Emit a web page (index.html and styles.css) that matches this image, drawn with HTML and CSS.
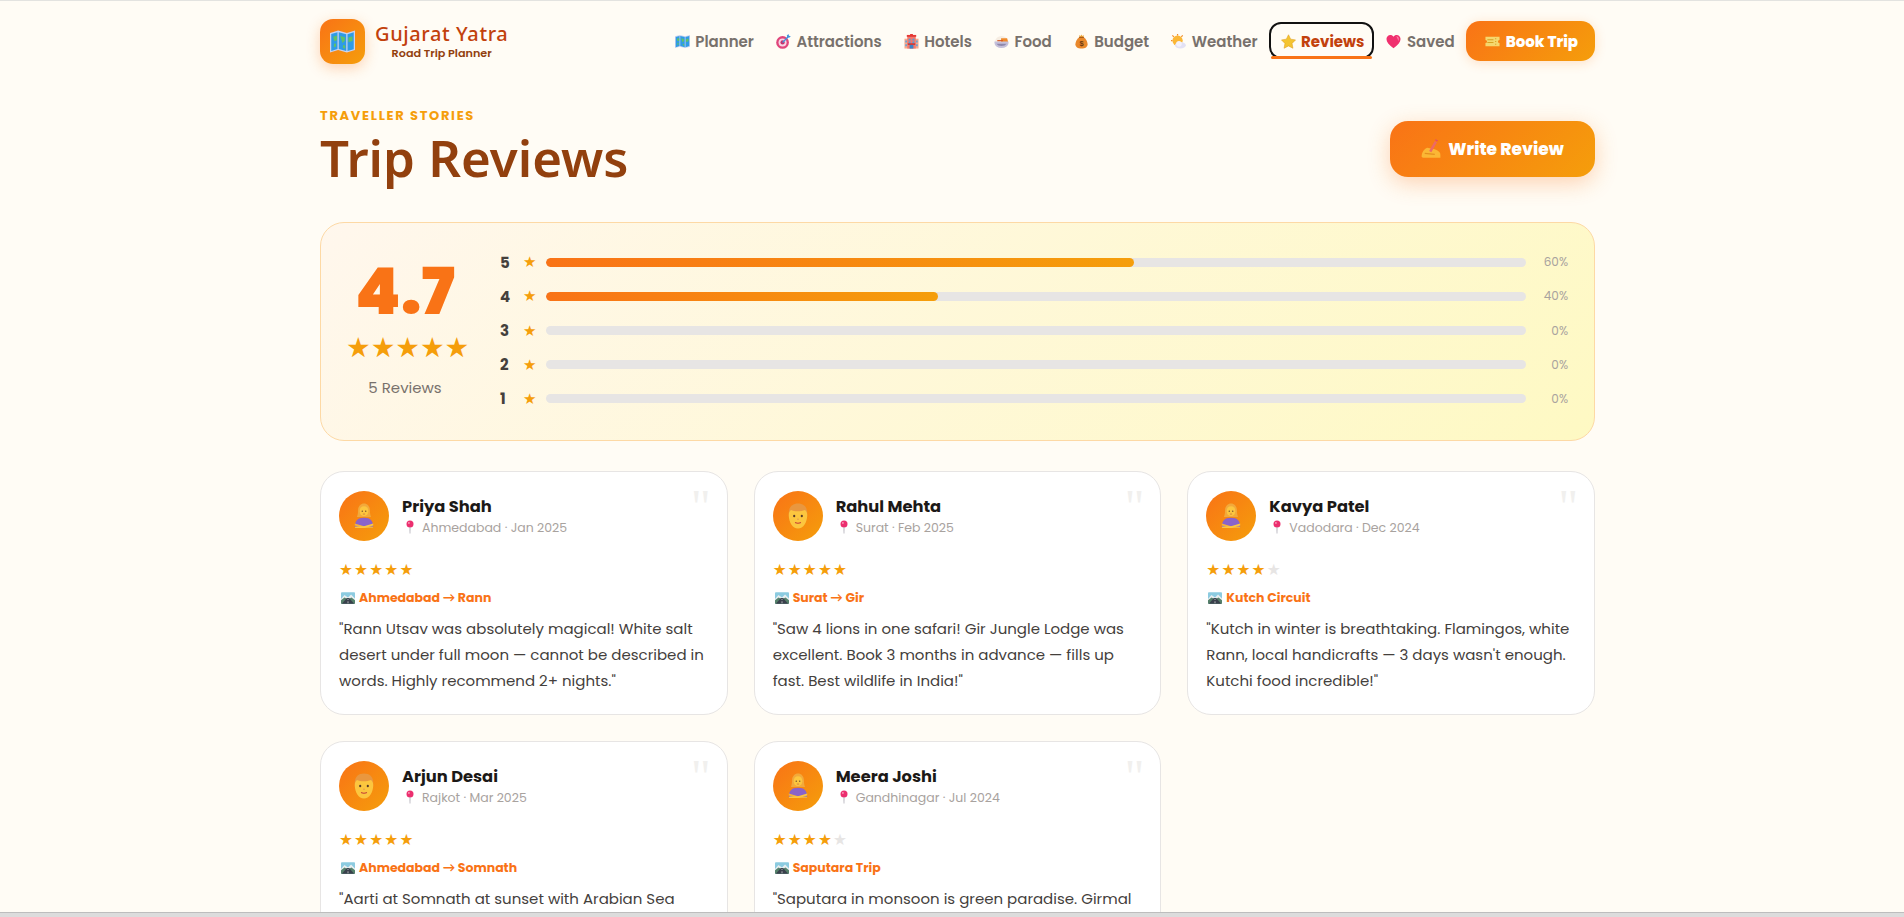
FILE: index.html
```html
<!DOCTYPE html>
<html><head><meta charset="utf-8"><title>Trip Reviews</title><link rel="stylesheet" href="styles.css"></head>
<body>
<svg width="0" height="0" class="defs">
<defs>
<symbol id="i-map" viewBox="0 0 16 16"><path d="M0 2.500L5.200 1l5.600 1.500L16 1v12.500l-5.200 1.500-5.600-1.500L0 15z" fill="#c9d2f0"/><path d="M.8 3.200l4-1.200v10.800l-4 1.200zM5.600 2l4.800 1.300v10.800L5.600 12.800zM11.200 3.300l4-1.300v10.900l-4 1.200z" fill="#2f9be6"/><path d="M2 5l2.500-.8v3l-1.700.6zM6.500 4.500l3 .8v2.200L8 9zM11.800 5.500l2.600-.8v3l-2.600.8zM8.300 10.300l1.400.3v2l-1.400-.6zM2.500 9.500l1.300-.3v2l-1.300.4z" fill="#5fc16a"/></symbol>
<symbol id="i-target" viewBox="0 0 16 16"><circle cx="7" cy="9" r="6.800" fill="#e0457b"/><circle cx="7" cy="9" r="4.300" fill="#f7d6e4"/><circle cx="7" cy="9" r="2.300" fill="#c92f6b"/><path d="M7 9l6-6" stroke="#3f93dc" stroke-width="1.400"/><path d="M11.500 1.500l.5 2 2 .5 1.800-1.700-2-.5-.500-1.800z" fill="#3f93dc"/></symbol>
<symbol id="i-hotel" viewBox="0 0 16 16"><rect x="0.500" y="5" width="15" height="10.500" fill="#f7a98e"/><rect x="3.500" y="2" width="9" height="13.500" fill="#f2786d"/><rect x="3" y="1" width="10" height="2" fill="#e53935"/><rect x="6.500" y="0" width="3" height="2" fill="#e53935"/><path d="M5 5h2v2H5zM9 5h2v2H9zM5 8h2v2H5zM9 8h2v2H9zM1.500 7h1.500v2H1.500zM13 7h1.500v2H13zM1.500 11h1.500v2H1.500zM13 11h1.500v2H13z" fill="#4aa3df"/><rect x="6" y="11.500" width="4" height="4" fill="#3b82c4"/><rect x="4" y="10" width="8" height="1.500" fill="#c62f2f"/></symbol>
<symbol id="i-food" viewBox="0 0 16 16"><path d="M1 8.500a7 6.500 0 0 1 14 0z" fill="#f6ede2"/><path d="M7.500 4.500H14l1 4H7.500z" fill="#f08a2a"/><path d="M.5 8h15v1.500a7.500 5.500 0 0 1-15 0z" fill="#c5c0da"/><path d="M2.500 10.500h11a6 4 0 0 1-11 0z" fill="#8f88ac"/><rect x="3.500" y="6.500" width="6" height="1.200" fill="#d9541e"/></symbol>
<symbol id="i-money" viewBox="0 0 16 16"><path d="M6 3C2.500 6 1.500 9 1.500 11c0 3 2.500 4.500 6.500 4.500s6.500-1.500 6.500-4.500c0-2-1-5-4.500-8z" fill="#e9882b"/><path d="M5.500 1L7 2l1-1.500L9 2l1.500-1L10 3.500H6z" fill="#f2a93b"/><rect x="5.500" y="3" width="5" height="1.200" fill="#a3591a"/><text x="8" y="12.500" class="svgt" text-anchor="middle">$</text></symbol>
<symbol id="i-sun" viewBox="0 0 16 16"><circle cx="7" cy="7" r="5.500" fill="#fbb735"/><path d="M7 0v1.500M1.500 1.500L3 3M0 7h1.500M12.500 1.500L11 3" stroke="#f28c28" stroke-width="1.300"/><ellipse cx="10" cy="12" rx="5.800" ry="3.500" fill="#e3e1f4"/><circle cx="8.500" cy="10.500" r="3" fill="#f3f1fb"/></symbol>
<symbol id="i-star" viewBox="0 0 16 16"><path d="M8 .8l2.300 4.700 5.200.8-3.700 3.700.9 5.200L8 12.700l-4.700 2.500.9-5.200L.5 6.300l5.200-.8z" fill="#f4c430" stroke="#e0a020" stroke-width=".6" stroke-linejoin="round"/></symbol>
<symbol id="i-heart" viewBox="0 0 16 16"><path d="M8 15.200C3 11.500 .5 8.500 .5 5.300.5 2.800 2.400 1 4.600 1 6 1 7.300 1.700 8 3c.7-1.300 2-2 3.400-2 2.200 0 4.100 1.800 4.100 4.300 0 3.200-2.500 6.200-7.500 9.900z" fill="#f0306e"/><path d="M11 2.500c1.500 0 2.700 1.200 2.700 2.800 0 .8-.3 1.500-.6 2.100-.5-2-1.500-3.800-2.100-4.900z" fill="#ff7fa6"/></symbol>
<symbol id="i-ticket" viewBox="0 0 16 16"><path d="M.5 3h15v3.300a1.700 1.700 0 0 0 0 3.400V13H.5V9.700a1.700 1.700 0 0 0 0-3.400z" fill="#f5d76e"/><path d="M2.500 5.500h6.500v1.200H2.500zM2.500 8.500h6.500v1.200H2.500zM10.800 4.500H12v1.200h-1.200zM10.800 7.400H12v1.200h-1.200zM10.800 10.300H12v1.200h-1.200z" fill="#d8a322"/></symbol>
<symbol id="i-write" viewBox="0 0 16 16"><path d="M.5 14c0-3.500 2-6 4.500-7l5 1c2.500.5 5.500 2 5.500 4.500V15H3c-1.600 0-2.500-.3-2.500-1z" fill="#fbb735"/><path d="M6.500 9.500L11 1.500l1.800 1-4.500 8z" fill="#ec6a66"/><path d="M11.300 1l1.800 1 .4-.8-1.800-1z" fill="#e0407a"/><path d="M3 11.500l8 .8" stroke="#e58f1e" stroke-width="1"/></symbol>
<symbol id="i-woman" viewBox="0 0 24 24"><path d="M6.500 7c0-4 2.500-6.500 5.500-6.500S17.500 3 17.500 7c0 3 .5 4.500 1 6H5.500c.5-1.500 1-3 1-6z" fill="#f2a93b"/><ellipse cx="12" cy="7.500" rx="4" ry="4.600" fill="#fcc63f"/><circle cx="10.400" cy="7.500" r=".6" fill="#5a3a28"/><circle cx="13.600" cy="7.500" r=".6" fill="#5a3a28"/><path d="M11 10.200h2" stroke="#c2603a" stroke-width=".6"/><path d="M3.600 22.500c-.3-6 2.400-9 8.400-9s8.700 3 8.400 9z" fill="#8a63c9"/><path d="M3.500 19l8.500 2.500 8 .2.500 1.300h-9L3.500 20.800z" fill="#f5b23a"/><path d="M20.500 19L12 21.500l-8 .2-.5 1.300h9l8-2.200z" fill="#fcc63f"/></symbol>
<symbol id="i-man" viewBox="0 0 24 24"><path d="M3.500 9C3.500 3.500 7 .5 12 .5s8.500 3 8.500 8.500v4h-17z" fill="#e9973f"/><path d="M3.500 11c0-2 .8-3.500 2-4.500 3 1.500 9 1.500 13 0 1.200 1 2 2.500 2 4.500 0 7-3.500 12.500-8.500 12.500S3.500 18 3.500 11z" fill="#fcc63f"/><ellipse cx="8.500" cy="12" rx="1" ry="1.200" fill="#5a3a28"/><ellipse cx="15.500" cy="12" rx="1" ry="1.200" fill="#5a3a28"/><path d="M9.300 18c1.600.8 3.700.8 5.400 0" stroke="#c43d36" stroke-width="1" fill="none"/><path d="M12 13.500l-.9 2.200h1.800z" fill="#e9a24c"/></symbol>
<symbol id="i-pin" viewBox="0 0 16 16"><circle cx="8" cy="5" r="3.500" fill="#ec2f6f"/><circle cx="6.900" cy="3.900" r=".9" fill="#f8a0bd"/><path d="M7.600 8h.8l-.1 6.500h-.6z" fill="#9d9aa5"/></symbol>
<symbol id="i-road" viewBox="0 0 16 16"><rect x="0" y="1.500" width="16" height="13" rx="1" fill="#8ccbe0"/><path d="M0 9l4-4.500 4 3 3.500-3.500L16 8.500V11H0z" fill="#e9eef0"/><path d="M0 10.500l4-3 4 2 4-2 4 3v4H0z" fill="#55806a"/><path d="M6.700 8h2.600L15 14.500H1z" fill="#3a404c"/><path d="M8 9v1.300M8 11.800v2.200" stroke="#e8e8e8" stroke-width=".8"/></symbol>
</defs>
</svg>
<div class="page">
<header class="topbar">
  <div class="brand">
    <div class="logo"><svg class="logo-ic"><use href="#i-map"/></svg></div>
    <div class="brand-text"><div class="brand-name">Gujarat Yatra</div><div class="brand-sub">Road Trip Planner</div></div>
  </div>
  <nav class="nav">
    <a class="nav-item"><svg class="em"><use href="#i-map"/></svg>Planner</a>
    <a class="nav-item"><svg class="em"><use href="#i-target"/></svg>Attractions</a>
    <a class="nav-item"><svg class="em"><use href="#i-hotel"/></svg>Hotels</a>
    <a class="nav-item"><svg class="em"><use href="#i-food"/></svg>Food</a>
    <a class="nav-item"><svg class="em"><use href="#i-money"/></svg>Budget</a>
    <a class="nav-item"><svg class="em"><use href="#i-sun"/></svg>Weather</a>
    <a class="nav-item active"><svg class="em"><use href="#i-star"/></svg>Reviews</a>
    <a class="nav-item"><svg class="em"><use href="#i-heart"/></svg>Saved</a>
    <a class="book"><svg class="em"><use href="#i-ticket"/></svg>Book Trip</a>
  </nav>
</header>
<section class="head">
  <div><div class="eyebrow">TRAVELLER STORIES</div><h1 class="title">Trip Reviews</h1></div>
  <button class="write"><svg class="em-lg"><use href="#i-write"/></svg>Write Review</button>
</section>
<section class="summary">
  <div class="score"><div class="score-num">4.7</div><div class="score-stars">★★★★★</div><div class="score-count">5 Reviews</div></div>
  <div class="bars">
    <div class="bar-row"><span class="bar-n">5</span><span class="bar-star">★</span><div class="track"><div class="fill" style="width:60%"></div></div><span class="pct">60%</span></div>
    <div class="bar-row"><span class="bar-n">4</span><span class="bar-star">★</span><div class="track"><div class="fill" style="width:40%"></div></div><span class="pct">40%</span></div>
    <div class="bar-row"><span class="bar-n">3</span><span class="bar-star">★</span><div class="track"></div><span class="pct">0%</span></div>
    <div class="bar-row"><span class="bar-n">2</span><span class="bar-star">★</span><div class="track"></div><span class="pct">0%</span></div>
    <div class="bar-row"><span class="bar-n">1</span><span class="bar-star">★</span><div class="track"></div><span class="pct">0%</span></div>
  </div>
</section>
<section class="grid">
  <article class="card"><span class="quote">"</span><div class="who"><div class="avatar"><svg class="av"><use href="#i-woman"/></svg></div><div><div class="name">Priya Shah</div><div class="meta"><svg class="em-p"><use href="#i-pin"/></svg>Ahmedabad · Jan 2025</div></div></div><div class="stars">★★★★★</div><div class="route"><svg class="em-s"><use href="#i-road"/></svg>Ahmedabad → Rann</div><p class="text">"Rann Utsav was absolutely magical! White salt desert under full moon — cannot be described in words. Highly recommend 2+ nights."</p></article>
  <article class="card"><span class="quote">"</span><div class="who"><div class="avatar"><svg class="av"><use href="#i-man"/></svg></div><div><div class="name">Rahul Mehta</div><div class="meta"><svg class="em-p"><use href="#i-pin"/></svg>Surat · Feb 2025</div></div></div><div class="stars">★★★★★</div><div class="route"><svg class="em-s"><use href="#i-road"/></svg>Surat → Gir</div><p class="text">"Saw 4 lions in one safari! Gir Jungle Lodge was excellent. Book 3 months in advance — fills up fast. Best wildlife in India!"</p></article>
  <article class="card"><span class="quote">"</span><div class="who"><div class="avatar"><svg class="av"><use href="#i-woman"/></svg></div><div><div class="name">Kavya Patel</div><div class="meta"><svg class="em-p"><use href="#i-pin"/></svg>Vadodara · Dec 2024</div></div></div><div class="stars">★★★★<span class="off">★</span></div><div class="route"><svg class="em-s"><use href="#i-road"/></svg>Kutch Circuit</div><p class="text">"Kutch in winter is breathtaking. Flamingos, white Rann, local handicrafts — 3 days wasn't enough. Kutchi food incredible!"</p></article>
  <article class="card"><span class="quote">"</span><div class="who"><div class="avatar"><svg class="av"><use href="#i-man"/></svg></div><div><div class="name">Arjun Desai</div><div class="meta"><svg class="em-p"><use href="#i-pin"/></svg>Rajkot · Mar 2025</div></div></div><div class="stars">★★★★★</div><div class="route"><svg class="em-s"><use href="#i-road"/></svg>Ahmedabad → Somnath</div><p class="text">"Aarti at Somnath at sunset with Arabian Sea waves behind is deeply moving. A must for every traveller."</p></article>
  <article class="card"><span class="quote">"</span><div class="who"><div class="avatar"><svg class="av"><use href="#i-woman"/></svg></div><div><div class="name">Meera Joshi</div><div class="meta"><svg class="em-p"><use href="#i-pin"/></svg>Gandhinagar · Jul 2024</div></div></div><div class="stars">★★★★<span class="off">★</span></div><div class="route"><svg class="em-s"><use href="#i-road"/></svg>Saputara Trip</div><p class="text">"Saputara in monsoon is green paradise. Girmal falls and the lake were lovely. Roads were a little slippery."</p></article>
</section>
</div>
<div class="statusbar"></div>
</body></html>
```
FILE: styles.css
```css
*{box-sizing:border-box}
html,body{margin:0;height:917px;overflow:hidden}
body{background:#fffcf5;font-family:Poppins,Lato,"Noto Sans",sans-serif;color:#1c1917;border-top:1px solid #e3e3e0;position:relative}
.defs{position:absolute}
.svgt{font:700 8px "Liberation Sans",sans-serif;fill:#6b3a10}
.page{width:1275px;margin-left:320px}
.topbar{display:flex;justify-content:space-between;align-items:center;height:81px}
.brand{display:flex;align-items:center;gap:10px}
.logo{width:45px;height:45px;border-radius:13px;background:linear-gradient(135deg,#f97316,#f59e0b);box-shadow:0 4px 14px rgba(249,115,22,.3);display:flex;align-items:center;justify-content:center}
.logo-ic{width:25px;height:25px}
.brand-text{text-align:center;margin-top:-1px}
.brand-name{font-family:"Noto Sans",sans-serif;font-size:20px;font-weight:500;color:#c2410c;letter-spacing:.6px;line-height:22px}
.brand-sub{font-size:11.200px;font-weight:600;color:#92400e;line-height:14px;margin-top:1px}
.nav{display:flex;align-items:center}
.nav-item{position:relative;display:flex;align-items:center;gap:5.500px;height:37px;padding:0 11px;font-size:15px;font-weight:600;color:#78716c;white-space:nowrap}
.nav-item.active{color:#c2410c;font-weight:700;border:2px solid #111;border-radius:12px;padding:2px 8px 0 10px;margin:-2px 1px 0 0}
.nav-item.active::after{content:"";position:absolute;left:0;right:0;bottom:-2px;height:3px;border-radius:2px;background:#f97316}
.em{width:15px;height:15px;flex:none}
.em-lg{width:20px;height:20px;flex:none}
.em-s{width:14px;height:14px;flex:none;margin-left:2px}
.em-p{width:16px;height:16px;flex:none}
.book{display:flex;align-items:center;gap:6px;height:40px;margin-top:-1px;padding:0 17px 0 19px;border-radius:14px;background:linear-gradient(135deg,#f97316,#f59e0b);color:#fff;font-size:15px;font-weight:800;box-shadow:0 2px 12px rgba(249,115,22,.2);white-space:nowrap}
.head{display:flex;justify-content:space-between;align-items:flex-start;height:140px;padding-top:25px}
.eyebrow{font-size:13px;font-weight:700;letter-spacing:1.700px;color:#f59e0b;line-height:18px}
.title{margin:0;font-family:"Noto Sans",sans-serif;font-size:51px;font-weight:600;color:#92400e;line-height:64px}
.write{display:flex;align-items:center;justify-content:center;gap:7px;width:205px;height:56px;margin-top:14px;border:0;border-radius:18px;background:linear-gradient(135deg,#f97316,#f59e0b);color:#fff;font:800 17px Poppins,Lato,sans-serif;box-shadow:0 6px 22px rgba(249,115,22,.3)}
.summary{display:flex;align-items:center;height:219px;border:1px solid #fdd9a5;border-radius:24px;background:linear-gradient(135deg,#fff7ed,#fef9c3);padding:0 26px 0 25px;gap:36px}
.score{width:118px;text-align:center;flex:none;padding-bottom:7px}
.score-num{font-size:65px;font-weight:900;color:#f97316;line-height:72px}
.score-stars{font-family:"DejaVu Sans",sans-serif;font-size:27.500px;color:#f59e0b;line-height:34px;margin-top:2px;white-space:nowrap}
.score-count{font-size:15px;color:#78716c;line-height:24px;margin-top:12px}
.bars{flex:1;display:flex;flex-direction:column;gap:14.200px;margin-top:-2px}
.bar-row{display:flex;align-items:center;height:20px}
.bar-n{width:23px;font-size:15px;font-weight:700;color:#44403c}
.bar-star{width:23px;font-family:"DejaVu Sans",sans-serif;font-size:15px;color:#f59e0b}
.track{flex:1;height:9px;border-radius:5px;background:#e7e5e4;overflow:hidden}
.fill{height:100%;border-radius:5px;background:linear-gradient(90deg,#f97316,#f59e0b)}
.pct{width:42px;text-align:right;font-size:12px;color:#a8a29e}
.grid{display:grid;grid-template-columns:repeat(3,1fr);gap:26px;margin-top:30px}
.card{position:relative;background:#fff;border:1px solid #e7e5e4;border-radius:24px;padding:19px 18px 18px;height:244px}
.quote{position:absolute;top:11px;right:16px;font-family:Georgia,"Liberation Serif",serif;font-size:48px;line-height:48px;color:#f1f0ee}
.who{display:flex;align-items:center;gap:13px}
.avatar{width:50px;height:50px;border-radius:50%;background:linear-gradient(135deg,#f97316,#f59e0b);display:flex;align-items:center;justify-content:center;flex:none}
.av{width:26px;height:26px}
.name{font-size:16.300px;font-weight:700;color:#1c1917;line-height:22px}
.meta{display:flex;align-items:center;gap:4px;font-size:12.500px;color:#a8a29e;line-height:19px}
.stars{font-family:"DejaVu Sans",sans-serif;font-size:15.500px;color:#f59e0b;line-height:20px;margin-top:19px;letter-spacing:1.200px}
.off{color:#e7e5e4}
.route{display:flex;align-items:center;gap:4px;font-size:12.500px;font-weight:700;color:#f97316;line-height:19px;margin-top:8px}
.text{margin:9px 0 0;font-size:15px;line-height:26px;color:#44403c}
.statusbar{position:absolute;left:0;right:0;bottom:0;height:5px;background:#dcdcdc;border-top:1px solid #bdbdbd}
```
